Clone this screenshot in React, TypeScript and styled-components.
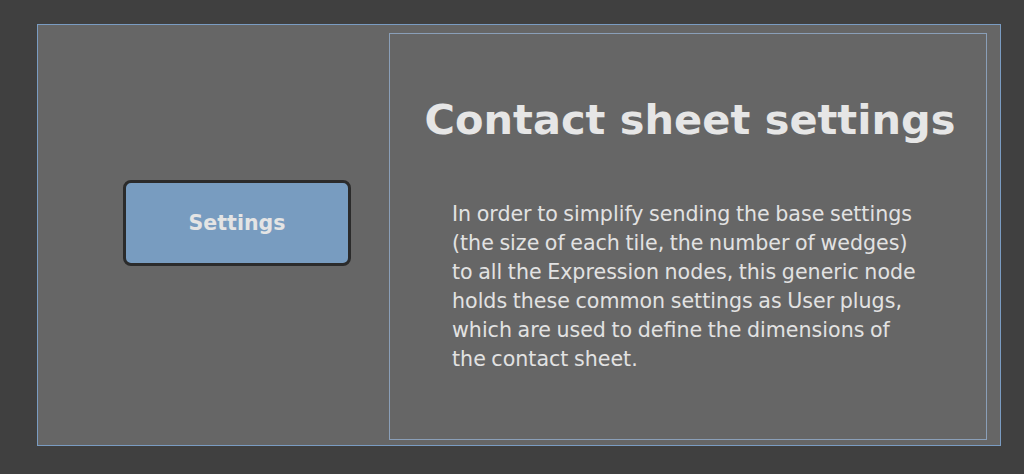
import styled, { createGlobalStyle } from "styled-components";

const GlobalStyle = createGlobalStyle`
  html, body {
    margin: 0;
    padding: 0;
    background: #404040;
    font-family: "DejaVu Sans", "Liberation Sans", sans-serif;
  }
`;

const lines = [
  "In order to simplify sending the base settings",
  "(the size of each tile, the number of wedges)",
  "to all the Expression nodes, this generic node",
  "holds these common settings as User plugs,",
  "which are used to define the dimensions of",
  "the contact sheet.",
];

const App = () => {
  return (
    <>
      <GlobalStyle />
      <Page>
        <Frame>
          <LeftPane>
            <SettingsButton>Settings</SettingsButton>
          </LeftPane>
          <Panel>
            <Title>Contact sheet settings</Title>
            <Description>
              {lines.map((line, index) => (
                <Line key={index}>{line}</Line>
              ))}
            </Description>
          </Panel>
        </Frame>
      </Page>
    </>
  );
};

export default App;

const Page = styled.div`
  width: 1024px;
  height: 474px;
  padding: 24px 0 0 37px;
  box-sizing: border-box;
`;

const Frame = styled.div`
  display: flex;
  width: 964px;
  height: 422px;
  box-sizing: border-box;
  padding: 8px 13px 5px 0;
  background: #666666;
  border: 1px solid #7a9cc2;
`;

const LeftPane = styled.div`
  flex: none;
  width: 351px;
  padding: 147px 0 0 85px;
  box-sizing: border-box;
`;

const SettingsButton = styled.button`
  width: 228px;
  height: 86px;
  box-sizing: border-box;
  border: 3px solid #2b2b2b;
  border-radius: 8px;
  background: #789cc0;
  color: #e4e4e4;
  font-family: "DejaVu Sans", sans-serif;
  font-weight: bold;
  font-size: 20.5px;
  padding: 0;
  cursor: pointer;
`;

const Panel = styled.div`
  flex: 1;
  display: flex;
  flex-direction: column;
  border: 1px solid #8a9fb8;
  box-sizing: border-box;
`;

const Title = styled.h1`
  margin: 62px 0 0;
  text-align: center;
  font-size: 41.5px;
  line-height: 48px;
  font-weight: bold;
  color: #e6e6e6;
  padding-left: 4px;
`;

const Description = styled.div`
  margin: 56px 0 0 62px;
  font-size: 20.6px;
  word-spacing: -1px;
  line-height: 29px;
  color: #e2e2e2;
`;

const Line = styled.div`
  white-space: nowrap;
`;
